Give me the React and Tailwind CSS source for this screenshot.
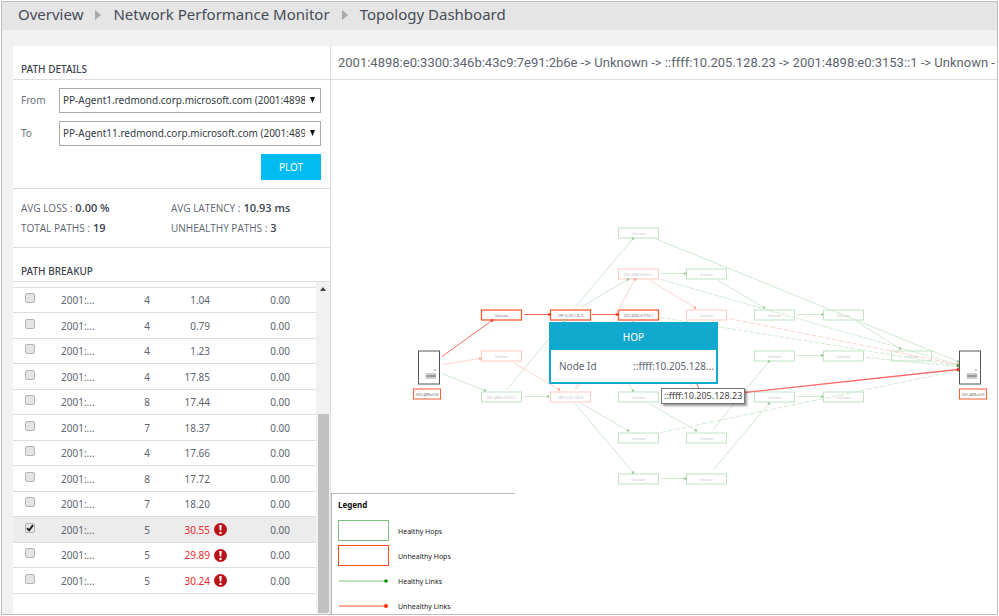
import React, { useState } from "react";

const FONT = "font-['Noto_Sans','Open_Sans',sans-serif]";

const PATHS = [
  { hops: 4, latency: "1.04", loss: "0.00" },
  { hops: 4, latency: "0.79", loss: "0.00" },
  { hops: 4, latency: "1.23", loss: "0.00" },
  { hops: 4, latency: "17.85", loss: "0.00" },
  { hops: 8, latency: "17.44", loss: "0.00" },
  { hops: 7, latency: "18.37", loss: "0.00" },
  { hops: 4, latency: "17.66", loss: "0.00" },
  { hops: 8, latency: "17.72", loss: "0.00" },
  { hops: 7, latency: "18.20", loss: "0.00" },
  { hops: 5, latency: "30.55", loss: "0.00", alert: true },
  { hops: 5, latency: "29.89", loss: "0.00", alert: true },
  { hops: 5, latency: "30.24", loss: "0.00", alert: true },
];

const GREEN = "#bfe3c1";
const PINK = "#ffc9bf";
const RED = "#ff5a36";
const ADDR = "2001:4898:e0:3153::1";

// [x, y, colour, label]
const NODES = [
  [481, 309, RED, "Unknown"],
  [481, 350, PINK, "Unknown"],
  [481, 391, GREEN, ADDR],
  [550, 309, RED, "::ffff:10.205.128.23"],
  [550, 391, PINK, "::ffff:10.205.128.23"],
  [618, 227, GREEN, "Unknown"],
  [618, 268, PINK, ADDR],
  [618, 309, RED, ADDR],
  [618, 391, GREEN, "Unknown"],
  [618, 432, GREEN, "Unknown"],
  [618, 473, GREEN, "Unknown"],
  [686, 268, GREEN, "Unknown"],
  [686, 309, PINK, "Unknown"],
  [686, 432, GREEN, "Unknown"],
  [686, 473, GREEN, "Unknown"],
  [754, 309, GREEN, "Unknown"],
  [754, 350, GREEN, "Unknown"],
  [754, 391, GREEN, "Unknown"],
  [823, 309, GREEN, "Unknown"],
  [823, 350, GREEN, "Unknown"],
  [823, 391, GREEN, "Unknown"],
  [891, 350, GREEN, "Unknown"],
];

// [x1, y1, x2, y2, dash]
const HEALTHY = [
  [442, 373, 485, 390],
  [507, 389, 564, 320],
  [524, 396, 548, 396],
  [575, 307, 633, 238],
  [582, 306, 628, 279],
  [661, 273, 685, 273],
  [655, 238, 958, 361],
  [718, 280, 764, 307],
  [661, 279, 958, 364, "4 1"],
  [661, 317, 958, 365, "4 2"],
  [797, 314, 822, 314],
  [797, 355, 822, 355],
  [797, 396, 822, 396],
  [856, 321, 900, 348],
  [866, 357, 958, 366, "4 1"],
  [628, 382, 633, 390],
  [649, 403, 696, 430],
  [581, 403, 628, 430],
  [575, 403, 633, 472],
  [661, 478, 685, 478],
  [713, 429, 769, 361],
  [713, 470, 769, 403],
  [661, 432, 958, 370, "5 2"],
];

const FADED = [
  [443, 364, 480, 358],
  [513, 362, 559, 389],
  [575, 388, 635, 279],
  [650, 280, 695, 307],
  [576, 389, 633, 320],
  [645, 320, 695, 390],
  [729, 318, 958, 364, "5 2"],
];

const UNHEALTHY = [
  [442, 356, 492, 320],
  [524, 314, 549, 314],
  [592, 314, 617, 314],
];

function Links({ items, stroke, dot, width = 1 }) {
  return items.map(([x1, y1, x2, y2, dash], i) => (
    <g key={i}>
      <line x1={x1} y1={y1} x2={x2} y2={y2} stroke={stroke} strokeWidth={width} strokeDasharray={dash} />
      <circle cx={x2} cy={y2} r="1.3" fill={dot} />
    </g>
  ));
}

function Server({ x, y, labelX, label }) {
  return (
    <g>
      <rect x={x + 0.5} y={y + 0.5} width="21" height="33" fill="#fff" stroke="#555" />
      <circle cx={x + 17} cy={y + 19.5} r="1" fill="#bbb" />
      <path d={`M${x + 8} ${y + 23.5}h10M${x + 8} ${y + 27.5}h10`} stroke="#999" />
      <path d={`M${x + 8} ${y + 25.5}h10`} stroke="#333" />
      <rect x={labelX + 0.5} y={y + 38.5} width="27" height="10" fill="#fff" stroke={RED} />
      <text x={labelX + 14} y={y + 45} textAnchor="middle" fontSize="3" fill="#666">
        {label}
      </text>
    </g>
  );
}

function Topology() {
  return (
    <svg
      viewBox="331 80 666 533"
      className="h-full w-full"
      preserveAspectRatio="xMidYMid meet"
      role="img"
      aria-label="Network topology"
    >
      {NODES.map(([x, y, color, label], i) => (
        <g key={i}>
          <rect x={x + 0.5} y={y + 0.5} width="40" height="10" fill="#fff" stroke={color} strokeWidth={color === RED ? 1.3 : 1} />
          <text x={x + 20.5} y={y + 7} textAnchor="middle" fontSize="3" fill={color === RED ? "#777" : "#c4c4c4"}>
            {label}
          </text>
        </g>
      ))}
      <Links items={HEALTHY} stroke="#cbe6cc" dot="#98cc9a" width={0.9} />
      <Links items={FADED} stroke="#ffcfc9" dot="#ffa69a" width={0.9} />
      <Links items={UNHEALTHY} stroke="#ff6a5c" dot="#ff2a10" />
      <path d="M695 380l5 10" stroke="#ff6a5c" />
      <path d="M745 392L958 369" stroke="#ff6a6a" strokeWidth="1.3" />
      <circle cx="958" cy="369" r="1.5" fill="#ff2a10" />
      <circle cx="958" cy="365" r="1.5" fill="#5a9a4c" />
      <Server x={418} y={350} labelX={413} label="2001:4898:e0:33" />
      <Server x={959} y={350} labelX={959} label="2001:4898:e0:33" />
    </svg>
  );
}

function AlertIcon() {
  return (
    <svg viewBox="0 0 13 13" className="size-[13px]" role="img" aria-label="Unhealthy">
      <circle cx="6.5" cy="6.5" r="6.5" fill="#ba141a" />
      <path d="M5.3 2h2.4l-.4 5.6H5.7z" fill="#fff" />
      <circle cx="6.5" cy="9.9" r="1.2" fill="#fff" />
    </svg>
  );
}

function Crumb({ children }) {
  return (
    <a href="#" className="text-[15px] text-[#454c56]">
      {children}
    </a>
  );
}

function Chevron() {
  return (
    <svg viewBox="0 0 6 10" className="h-[10px] w-[6px]" aria-hidden="true">
      <path d="M0 0L6 5L0 10z" fill="#a9a9a9" />
    </svg>
  );
}

function PanelTitle({ children }) {
  return (
    <h2 className="h-[34px] shrink-0 border-b border-[#dedede] pt-[16px] pl-[8px] text-[10px] leading-[15px] font-medium text-[#3c4450]">
      {children}
    </h2>
  );
}

function AgentSelect({ id, label, value }) {
  return (
    <div className="flex items-center">
      <label htmlFor={id} className="w-[38px] shrink-0 text-[10px] text-[#6a727c]">
        {label}
      </label>
      <div className="relative min-w-0 flex-1">
        <select
          id={id}
          className="block h-[25px] w-full appearance-none border border-[#a9a9a9] bg-white pr-[15px] pl-[3px] text-[10px] text-[#333a44]"
        >
          <option>{value}</option>
        </select>
        <svg viewBox="0 0 5 6" className="pointer-events-none absolute top-[9px] right-[6px] h-[6px] w-[5px]" aria-hidden="true">
          <path d="M0 0H5L2.5 6z" fill="#111" />
        </svg>
      </div>
    </div>
  );
}

function Stat({ label, value }) {
  return (
    <div className="flex items-baseline gap-[3px] font-['Open_Sans',sans-serif] leading-[16px] whitespace-nowrap">
      <dt className="text-[10px] text-[#5d6570]">{label} :</dt>
      <dd className="text-[11px] font-semibold text-[#3c4450]">{value}</dd>
    </div>
  );
}

function LegendRow({ children, label }) {
  return (
    <li className="flex h-[25px] items-center gap-[9px] text-[7px] text-[#222]">
      <span className="flex w-[51px] items-center">{children}</span>
      <span className="pt-[3px]">{label}</span>
    </li>
  );
}

function Check({ checked, onChange, label }) {
  return (
    <span className="relative block size-[10px]">
      <input
        type="checkbox"
        aria-label={label}
        checked={checked}
        onChange={onChange}
        className="block size-[10px] appearance-none rounded-[2px] border border-[#b4b4b4] bg-[#e4e4e4]"
      />
      {checked && (
        <svg viewBox="0 0 10 10" className="pointer-events-none absolute inset-0 size-[10px]" aria-hidden="true">
          <path d="M2 5.2L4.1 7.3L8 2.2" fill="none" stroke="#222" strokeWidth="1.9" />
        </svg>
      )}
    </span>
  );
}

export default function App() {
  const [selected, setSelected] = useState(9);

  return (
    <div className={`h-screen overflow-hidden bg-white p-px ${FONT}`}>
      <div className="flex h-full flex-col overflow-hidden border border-[#bdbdbd] bg-[#f1f1f1]">
        <nav className="flex h-[28px] shrink-0 items-center gap-[12px] bg-[#e5e5e5] pb-[3px] pl-[16px]">
          <Crumb>Overview</Crumb>
          <Chevron />
          <Crumb>Network Performance Monitor</Crumb>
          <Chevron />
          <Crumb>Topology Dashboard</Crumb>
        </nav>

        <div className="flex min-h-0 flex-1 pt-[16px] pl-[11px]">
          <aside className="flex w-[318px] shrink-0 flex-col border-r border-[#dedede] bg-white">
            <PanelTitle>PATH DETAILS</PanelTitle>
            <form
              className="flex shrink-0 flex-col gap-[8px] border-b border-[#dedede] pt-[8px] pr-[9px] pb-[8px] pl-[8px]"
              onSubmit={(e) => e.preventDefault()}
            >
              <AgentSelect id="from" label="From" value="PP-Agent1.redmond.corp.microsoft.com (2001:4898:e0:3300)" />
              <AgentSelect id="to" label="To" value="PP-Agent11.redmond.corp.microsoft.com (2001:4898:e0:3153)" />
              <button type="submit" className="h-[26px] w-[60px] self-end bg-[#00bcf2] text-[10px] text-white">
                PLOT
              </button>
            </form>
            <dl className="grid h-[59px] shrink-0 grid-cols-[150px_1fr] content-center gap-y-[4px] border-b border-[#dedede] pl-[8px]">
              <Stat label="AVG LOSS" value="0.00 %" />
              <Stat label="AVG LATENCY" value="10.93 ms" />
              <Stat label="TOTAL PATHS" value="19" />
              <Stat label="UNHEALTHY PATHS" value="3" />
            </dl>
            <PanelTitle>PATH BREAKUP</PanelTitle>
            <div className="flex min-h-0 flex-1">
              <div className="min-w-0 flex-1 overflow-hidden pt-[5px]">
                <table className="w-full table-fixed border-collapse border-t border-[#dedede] text-[10px] text-[#5d6570]">
                  <colgroup>
                    <col className="w-[48px]" />
                    <col className="w-[50px]" />
                    <col className="w-[39px]" />
                    <col className="w-[60px]" />
                    <col className="w-[20px]" />
                    <col />
                  </colgroup>
                  <tbody>
                    {PATHS.map((p, i) => (
                      <tr
                        key={i}
                        className={`h-[25px] border-b border-[#dedede] leading-[16px] even:h-[26px] ${i === selected ? "bg-[#ececec]" : "bg-white"}`}
                      >
                        <td className="pb-[4px] pl-[12px]">
                          <Check label={`Path ${i + 1}`} checked={i === selected} onChange={() => setSelected(i)} />
                        </td>
                        <td>2001:...</td>
                        <td className="text-right">{p.hops}</td>
                        <td className={`text-right ${p.alert ? "text-[#f0282d]" : ""}`}>{p.latency}</td>
                        <td className="pl-[4px]">{p.alert && <AlertIcon />}</td>
                        <td className="pr-[26px] text-right">{p.loss}</td>
                      </tr>
                    ))}
                  </tbody>
                </table>
              </div>
              <div className="flex w-[14px] shrink-0 flex-col items-center bg-[#f1f1f1] pt-[5px] pb-px">
                <svg viewBox="0 0 6 4" className="h-[4px] w-[6px]" aria-hidden="true">
                  <path d="M3 0L6 4H0z" fill="#444" />
                </svg>
                <div className="mt-[123px] w-[11px] flex-1 bg-[#c1c1c1]" />
              </div>
            </div>
          </aside>

          <main className="flex min-w-0 flex-1 flex-col bg-white">
            <p className="h-[34px] shrink-0 overflow-hidden border-b border-[#dedede] pl-[7px] font-['Roboto',sans-serif] text-[13px] leading-[34px] whitespace-nowrap text-[#5d6570]">
              2001:4898:e0:3300:346b:43c9:7e91:2b6e -&gt; Unknown -&gt; ::ffff:10.205.128.23 -&gt; 2001:4898:e0:3153::1 -&gt; Unknown -
            </p>
            <div className="relative min-h-0 flex-1 overflow-hidden">
              <Topology />
              <section className="absolute top-[242px] left-[218px] w-[169px] border-2 border-[#12a9cf] bg-white">
                <h3 className="bg-[#12a9cf] text-center text-[10px] leading-[26px] text-white">HOP</h3>
                <div className="flex h-[32px] items-center justify-between pr-[2px] pl-[8px] text-[10px] text-[#5d6570]">
                  <span>Node Id</span>
                  <span>::ffff:10.205.128...</span>
                </div>
              </section>
              <div
                role="tooltip"
                className="absolute top-[308px] left-[330px] border border-[#777] bg-white px-[2px] text-[9px] leading-[14px] whitespace-nowrap text-[#444] shadow-[2px_2px_2px_rgba(0,0,0,0.4)]"
              >
                ::ffff:10.205.128.23
              </div>
              <section className="absolute -bottom-1 left-0 w-[184px] border-t border-l border-[#b9b9b9] pl-[6px]">
                <h3 className="pt-[5px] text-[8px] leading-[12px] font-bold text-[#111]">Legend</h3>
                <ul className="pt-[7px]">
                  <LegendRow label="Healthy Hops">
                    <span className="h-[21px] w-[51px] border border-[#7cc27e]" />
                  </LegendRow>
                  <LegendRow label="Unhealthy Hops">
                    <span className="h-[21px] w-[51px] border border-[#ff4a20]" />
                  </LegendRow>
                  <LegendRow label="Healthy Links">
                    <svg viewBox="0 0 51 4" className="h-[4px] w-[51px]" aria-hidden="true">
                      <path d="M1 2H48" stroke="#7cc27e" />
                      <circle cx="48" cy="2" r="1.8" fill="#0c8a0c" />
                    </svg>
                  </LegendRow>
                  <LegendRow label="Unhealthy Links">
                    <svg viewBox="0 0 51 4" className="h-[4px] w-[51px]" aria-hidden="true">
                      <path d="M1 2H48" stroke="#ff5a36" />
                      <circle cx="48" cy="2" r="2" fill="#ff2a00" />
                    </svg>
                  </LegendRow>
                </ul>
              </section>
            </div>
          </main>
        </div>
      </div>
    </div>
  );
}
